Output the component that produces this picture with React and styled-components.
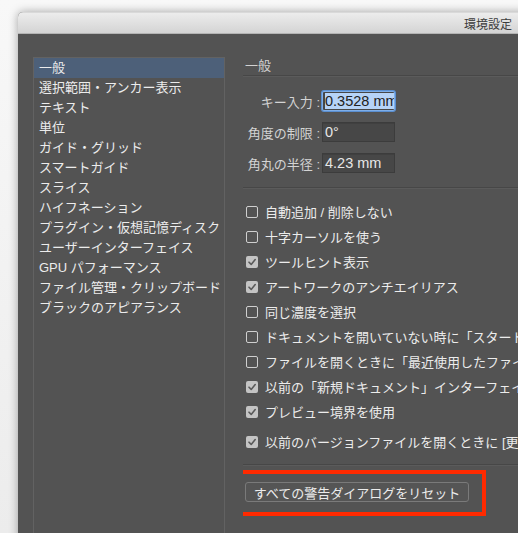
import styled, { createGlobalStyle } from "styled-components";

const GlobalStyle = createGlobalStyle`
  html, body {
    margin: 0;
    padding: 0;
    width: 518px;
    height: 533px;
    overflow: hidden;
    background: #f2f2f2;
    font-family: "Liberation Sans", "Noto Sans CJK JP", sans-serif;
  }
  * { box-sizing: border-box; }
`;

const sidebarItems = [
  "一般",
  "選択範囲・アンカー表示",
  "テキスト",
  "単位",
  "ガイド・グリッド",
  "スマートガイド",
  "スライス",
  "ハイフネーション",
  "プラグイン・仮想記憶ディスク",
  "ユーザーインターフェイス",
  "GPU パフォーマンス",
  "ファイル管理・クリップボード",
  "ブラックのアピアランス",
];

const fields = [
  { label: "キー入力 :", value: "0.3528 mm", focused: true },
  { label: "角度の制限 :", value: "0°" },
  { label: "角丸の半径 :", value: "4.23 mm" },
];

const options = [
  { text: "自動追加 / 削除しない", checked: false },
  { text: "十字カーソルを使う", checked: false },
  { text: "ツールヒント表示", checked: true },
  { text: "アートワークのアンチエイリアス", checked: true },
  { text: "同じ濃度を選択", checked: false },
  { text: "ドキュメントを開いていない時に「スタート」ワークスペースを表示", checked: false },
  { text: "ファイルを開くときに「最近使用したファイル」ワークスペースを表示", checked: false },
  { text: "以前の「新規ドキュメント」インターフェイスを使用", checked: true },
  { text: "プレビュー境界を使用", checked: true },
  { text: "以前のバージョンファイルを開くときに [更新] を表示", checked: true, spaced: true },
];

export default function App() {
  return (
    <>
      <GlobalStyle />
      <Page>
        <Window>
          <TitleBar>環境設定</TitleBar>
          <Body>
            <Sidebar>
              {sidebarItems.map((item, i) => (
                <SidebarItem key={item} $active={i === 0}>
                  {item}
                </SidebarItem>
              ))}
            </Sidebar>
            <Main>
              <SectionTitle>一般</SectionTitle>
              <Fields>
                {fields.map((f) => (
                  <FieldRow key={f.label}>
                    <FieldLabel>{f.label}</FieldLabel>
                    <FieldBox $focused={f.focused}>
                      {f.focused ? <Selected>{f.value}</Selected> : f.value}
                    </FieldBox>
                  </FieldRow>
                ))}
              </Fields>
              <Divider />
              <Options>
                {options.map((o) => (
                  <OptionRow key={o.text} $spaced={o.spaced}>
                    <Box $checked={o.checked}>
                      {o.checked && (
                        <svg width="12" height="12" viewBox="0 0 12 12">
                          <polyline
                            points="3,6.2 5.2,8.4 9.2,3.6"
                            fill="none"
                            stroke="#5a5a5a"
                            strokeWidth="1.6"
                            strokeLinecap="round"
                            strokeLinejoin="round"
                          />
                        </svg>
                      )}
                    </Box>
                    <OptionText>{o.text}</OptionText>
                  </OptionRow>
                ))}
              </Options>
              <Divider />
              <Highlight>
                <ResetButton>すべての警告ダイアログをリセット</ResetButton>
              </Highlight>
            </Main>
          </Body>
        </Window>
      </Page>
    </>
  );
}

const Page = styled.div`
  width: 518px;
  height: 533px;
  padding: 12px 0 0 18px;
  background: linear-gradient(to bottom, #f8f8f8, #ececec);
  overflow: hidden;
`;

const Window = styled.div`
  width: 520px;
  height: 530px;
  border-radius: 5px 0 0 0;
  overflow: hidden;
  background: #535353;
  box-shadow: 0 0 10px rgba(0, 0, 0, 0.35);
  display: flex;
  flex-direction: column;
`;

const TitleBar = styled.div`
  height: 22px;
  flex: none;
  padding-right: 26px;
  display: flex;
  align-items: center;
  justify-content: flex-end;
  font-size: 12px;
  color: #3c3c3c;
  background: linear-gradient(to bottom, #ececec, #d4d4d4);
  border-top: 1px solid #d9d9d9;
  border-bottom: 1px solid #b4b4b4;
`;

const Body = styled.div`
  flex: 1;
  display: flex;
  padding: 23px 0 0 15px;
  white-space: nowrap;
`;

const Sidebar = styled.div`
  width: 192px;
  flex: none;
  border: 1px solid #626262;
  border-bottom: none;
  background: #535353;
`;

const SidebarItem = styled.div`
  height: 20px;
  line-height: 20px;
  padding-left: 5px;
  font-size: 13px;
  color: #ececec;
  background: ${(p) => (p.$active ? "#4d6079" : "transparent")};
`;

const Main = styled.div`
  flex: 1;
  margin-left: 18px;
  display: flex;
  flex-direction: column;
  align-items: flex-start;
  overflow: hidden;
`;

const SectionTitle = styled.div`
  align-self: stretch;
  height: 19px;
  line-height: 17px;
  padding-left: 2px;
  font-size: 13px;
  color: #d2d2d2;
  border-bottom: 1px solid #474747;
  box-shadow: 0 1px 0 #5b5b5b;
`;

const Fields = styled.div`
  display: flex;
  flex-direction: column;
  gap: 11px;
  padding: 15px 0 14px 2px;
`;

const FieldRow = styled.div`
  display: flex;
  align-items: center;
  gap: 2px;
`;

const FieldLabel = styled.div`
  width: 75px;
  text-align: right;
  font-size: 13px;
  color: #d4d4d4;
`;

const FieldBox = styled.div`
  width: 73px;
  height: 20px;
  padding: 0 2px;
  display: flex;
  align-items: center;
  overflow: hidden;
  font-size: 14.5px;
  color: #e6e6e6;
  background: #474747;
  border: 1px solid ${(p) => (p.$focused ? "#7eaee8" : "#3c3c3c")};
  box-shadow: ${(p) => (p.$focused ? "0 0 0 1px #5b8fd0" : "inset 0 1px 0 #404040")};
  border-radius: ${(p) => (p.$focused ? "2px" : "0")};
`;

const Selected = styled.span`
  background: #b6d3f7;
  color: #222;
  line-height: 16px;
  padding-right: 4px;
`;

const Divider = styled.div`
  align-self: stretch;
  height: 2px;
  border-top: 1px solid #474747;
  border-bottom: 1px solid #5b5b5b;
  flex: none;
`;

const Options = styled.div`
  display: flex;
  flex-direction: column;
  padding: 10px 0 10px 3px;
`;

const OptionRow = styled.div`
  height: 25px;
  display: flex;
  align-items: center;
  gap: 7px;
  margin-top: ${(p) => (p.$spaced ? "5px" : "0")};
`;

const Box = styled.span`
  width: 12px;
  height: 12px;
  flex: none;
  border-radius: 2px;
  border: ${(p) => (p.$checked ? "none" : "1px solid #cfcfcf")};
  background: ${(p) => (p.$checked ? "#c4c4c4" : "transparent")};
  display: flex;
  svg { display: block; }
`;

const OptionText = styled.span`
  font-size: 13px;
  color: #ececec;
`;

const Highlight = styled.div`
  margin: 4px 0 0 -10px;
  padding: 8px 13px 10px 8px;
  border: 4px solid #ff2a00;
`;

const ResetButton = styled.button`
  width: 224px;
  height: 20px;
  padding: 0;
  display: flex;
  align-items: center;
  justify-content: center;
  font-family: inherit;
  font-size: 13px;
  color: #ececec;
  background: #555555;
  border: 1px solid #7a7a7a;
  border-radius: 3px;
`;
